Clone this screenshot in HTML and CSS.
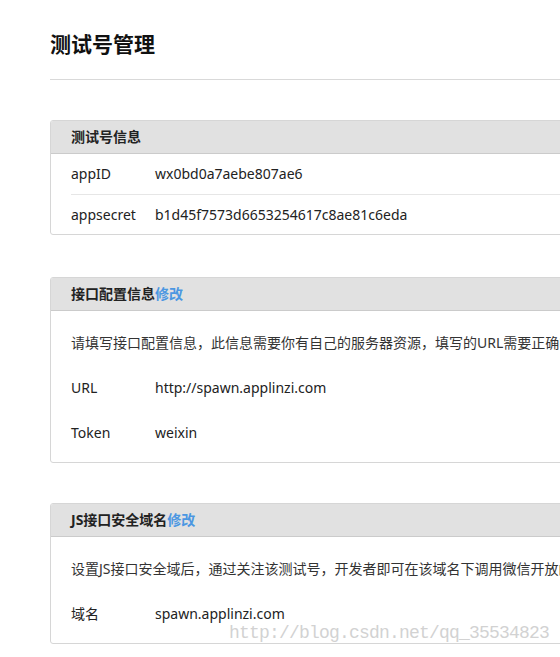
FILE: index.html
```html
<!DOCTYPE html>
<html lang="zh-CN">
<head>
<meta charset="utf-8">
<title>测试号管理</title>
<link rel="stylesheet" href="styles.css">
</head>
<body>
<div class="page">
  <h1 class="title">测试号管理</h1>

  <section class="panel">
    <div class="panel-head">测试号信息</div>
    <div class="panel-body list">
      <div class="row"><span class="label">appID</span><span class="value">wx0bd0a7aebe807ae6</span></div>
      <div class="row"><span class="label">appsecret</span><span class="value">b1d45f7573d6653254617c8ae81c6eda</span></div>
    </div>
  </section>

  <section class="panel">
    <div class="panel-head">接口配置信息<a class="edit" href="#">修改</a></div>
    <div class="panel-body plain">
      <div class="line desc">请填写接口配置信息，此信息需要你有自己的服务器资源，填写的URL需要正确响应微信发送的Token验证，请阅读消息接口使用指南。</div>
      <div class="line"><span class="label">URL</span><span class="value">http://spawn.applinzi.com</span></div>
      <div class="line"><span class="label">Token</span><span class="value">weixin</span></div>
    </div>
  </section>

  <section class="panel">
    <div class="panel-head">JS接口安全域名<a class="edit" href="#">修改</a></div>
    <div class="panel-body plain">
      <div class="line desc">设置JS接口安全域后，通过关注该测试号，开发者即可在该域名下调用微信开放的JS接口，请阅读微信JSSDK开发文档。</div>
      <div class="line"><span class="label">域名</span><span class="value">spawn.applinzi.com</span></div>
    </div>
  </section>
</div>
<div class="watermark">http://blog.csdn.net/qq_35534823</div>
</body>
</html>
```

FILE: styles.css
```css
html, body {
  margin: 0;
  padding: 0;
  background: #fff;
  overflow: hidden;
}

body {
  font-family: "Noto Sans", "Noto Sans CJK SC", sans-serif;
  font-size: 14px;
  color: #222;
}

.page {
  width: 860px;
  padding: 29px 0 0 50px;
}

.title {
  margin: 0;
  padding-bottom: 20px;
  border-bottom: 1px solid #d9d9d9;
  font-size: 21px;
  line-height: 30px;
  font-weight: bold;
  color: #111;
}

.panel {
  margin-top: 40px;
  border: 1px solid #d6d6d6;
  border-radius: 3px;
  overflow: hidden;
}

.title + .panel + .panel {
  margin-top: 42px;
}

.panel-head {
  height: 32px;
  line-height: 32px;
  padding: 0 20px;
  background: #e1e1e1;
  border-bottom: 1px solid #cbcbcb;
  font-weight: bold;
  color: #222;
  white-space: nowrap;
}

.edit {
  color: #4b97e2;
  text-decoration: none;
}

.list .row {
  display: flex;
  height: 40px;
  line-height: 40px;
  margin: 0 20px;
  white-space: nowrap;
}

.list .row + .row {
  border-top: 1px solid #e6e6e6;
  height: 39px;
  line-height: 39px;
}

.plain {
  padding: 9px 20px 7px;
}

.plain .line {
  display: flex;
  height: 45px;
  line-height: 45px;
  white-space: nowrap;
}

.label {
  width: 84px;
  flex: none;
}

.value {
  flex: none;
}

.desc {
  color: #333;
}

.watermark {
  position: absolute;
  left: 229px;
  top: 623px;
  font-family: "Liberation Mono", monospace;
  font-size: 18px;
  letter-spacing: -0.8px;
  color: #d2d2d2;
  white-space: nowrap;
}
```
